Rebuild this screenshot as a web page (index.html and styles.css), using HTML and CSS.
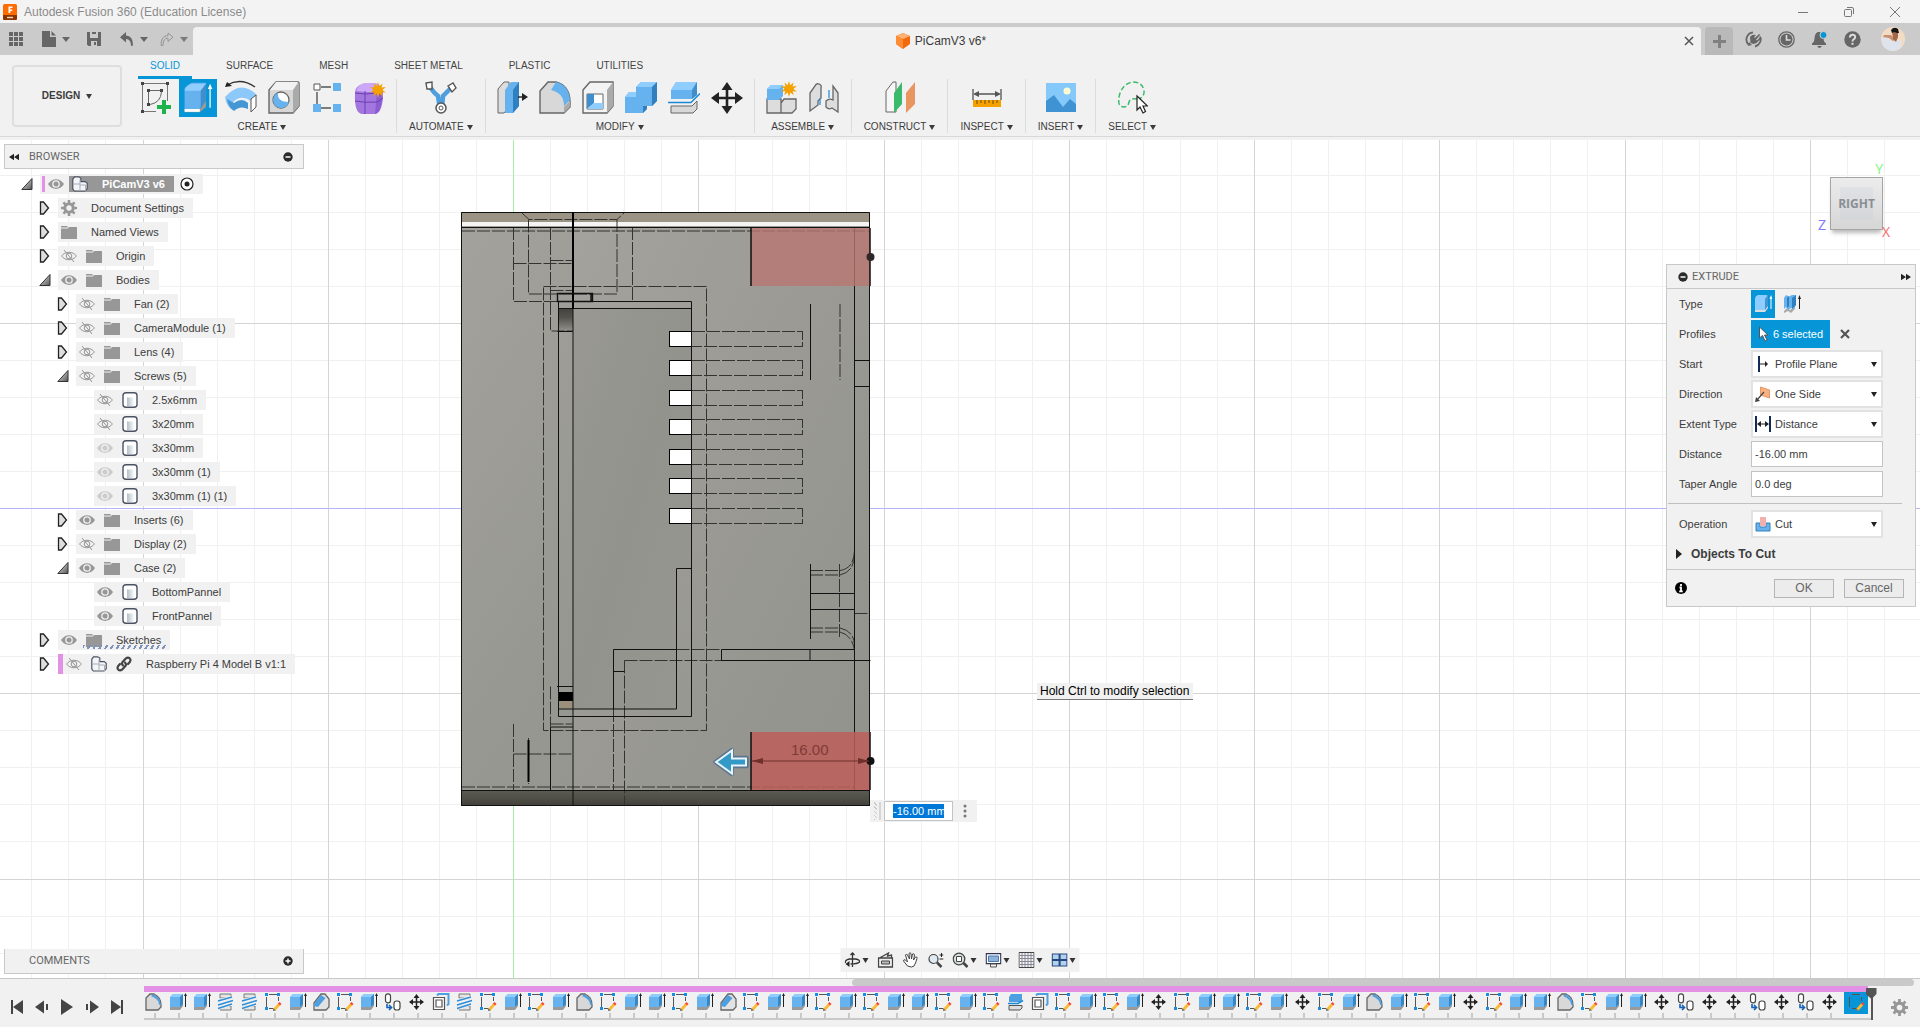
FILE: index.html
```html
<!DOCTYPE html>
<html lang="en">
<head>
<meta charset="utf-8">
<title>Autodesk Fusion 360 (Education License)</title>
<link rel="stylesheet" href="styles.css">
</head>
<body>
<svg class="sprite" aria-hidden="true">
  <defs>
    <linearGradient id="gTri" x1="0" y1="0" x2="1" y2="1"><stop offset="0" stop-color="#eee"/><stop offset="1" stop-color="#555"/></linearGradient>
    <linearGradient id="gCyl"><stop offset="0" stop-color="#fff"/><stop offset=".1" stop-color="#b9c0cb"/><stop offset="1" stop-color="#fff"/></linearGradient>
  </defs>
  <symbol id="closed" viewBox="0 0 12 14"><path d="M1.500 1h3l5 6-5 6h-3z" fill="#ddd" stroke="#222" stroke-width="1.300"/></symbol>
  <symbol id="open" viewBox="0 0 12 14"><path d="M11 1.500V12.500H.8z" fill="url(#gTri)" stroke="#333"/></symbol>
  <symbol id="eye" viewBox="0 0 16 16"><path d="M0 8C4 1.500 12 1.500 16 8 12 14.500 4 14.500 0 8z" fill="#979797"/><circle cx="8" cy="8" r="3.200" fill="#979797" stroke="#f1f1f1" stroke-width="1.300"/></symbol>
  <symbol id="eyeoff" viewBox="0 0 16 16"><path d="M.6 8C4 3 12 3 15.400 8 12 13 4 13 .6 8z" fill="none" stroke="#979797"/><circle cx="8" cy="8" r="2.800" fill="none" stroke="#979797"/><path d="M3 2l10 12" stroke="#979797"/></symbol>
  <symbol id="folder" viewBox="0 0 16 16"><path d="M0 2h6l1.500 1.500H0zM0 4.500h7l1-1.500h8v12H0z" fill="#979797"/></symbol>
  <symbol id="gear" viewBox="0 0 16 16"><circle cx="8" cy="8" r="4.200" fill="none" stroke="#979797" stroke-width="3"/><path d="M8 0v3M8 13v3M0 8h3M13 8h3M2.400 2.400l2 2M11.600 11.600l2 2M13.600 2.400l-2 2M4.400 11.600l-2 2" stroke="#979797" stroke-width="2.600"/></symbol>
  <symbol id="cyl" viewBox="0 0 16 16"><path d="M1 3.500Q1 .8 4 .8h8q3 0 3 2.700v9q0 2.700-3 2.700H4q-3 0-3-2.700z" fill="#fff" stroke="#4a5263" stroke-width="1.400"/><path d="M4.500 5.500h8V14h-8z" fill="url(#gCyl)"/></symbol>
  <symbol id="comp" viewBox="0 0 16 16"><path d="M.8 3.200L2.600.8h4L8.800 2v3.600h4.400l2 1.600v5.600l-2 2.200H2.400l-1.600-2z" fill="#f4f5f7" stroke="#4a5263" stroke-width="1.200"/><path d="M1 8h7V3.500M8 8v7M8 9h5.500v6" fill="none" stroke="#a9aeb8"/></symbol>
  <symbol id="link" viewBox="0 0 16 16"><g fill="none" stroke="#444" stroke-width="2.200" stroke-linecap="round"><path d="M7 9.500Q5 7.500 7 5.500L10 2.300q2-1.500 3.600 0t.2 3.700L12 8"/><path d="M9 6.500q2 2 0 4l-3 3.200q-2 1.500-3.600 0T2.200 10L4 8"/></g></symbol>
  <symbol id="minus" viewBox="0 0 10 10"><circle cx="5" cy="5" r="4.700" fill="#2b2b2b"/><path d="M2.500 5h5" stroke="#fff" stroke-width="1.500"/></symbol>
  <symbol id="plus" viewBox="0 0 10 10"><circle cx="5" cy="5" r="4.700" fill="#2b2b2b"/><path d="M2.500 5h5M5 2.500v5" stroke="#fff" stroke-width="1.400"/></symbol>
  <symbol id="dbl" viewBox="0 0 10 8"><path d="M5 .8v6.400L0 4zM10 .8v6.400L5 4z" fill="#222"/></symbol>
  <symbol id="cube" viewBox="0 0 14 16"><path d="M7 0l7 3v8l-7 5-7-5V3z" fill="#f26a0c"/><path d="M7 0l7 3-7 3-7-3z" fill="#ffb073"/><path d="M0 3l7 3v10l-7-5z" fill="#ff8b33"/></symbol>
  <symbol id="star" viewBox="0 0 16 16"><path d="M8 0l1.300 4.200L12.500 1.500 11.600 5.500l4.200-.6L12.400 8l3.500 2.400-4.300-.2 1.200 4-3.500-2.800L8 16l-1.400-4.600-3.400 2.800 1.200-4-4.300.2L3.500 8 .2 4.900l4.200.6-.9-4 3.200 2.700z" fill="#f5a100"/></symbol>

  <symbol id="r-sketch" viewBox="0 0 32 38"><path d="M4 4.500h24M3.500 5v26M28.500 5v17M4 32.500h13" stroke="#777" fill="none"/><path d="M2 3h3v3H2zM27 3h3v3h-3zM2 31h3v3H2zM8 10h3v3H8zM21 10h3v3h-3zM8 24h3v3H8z" fill="#444"/><path d="M11 11.500h10M9.500 13v11M11 25.500q11-2 11.500-13" stroke="#666" fill="none"/><path d="M23 21h4v5h5v4h-5v5h-4v-5h-5v-4h5z" fill="#1fb34c"/></symbol>
  <symbol id="r-extrude" viewBox="0 0 32 38"><path d="M1 31h17l7-9v7l-7 6H1z" fill="#999"/><path d="M1 31h17v3.500H1z" fill="#fff"/><path d="M1 10q0-3 3-5l3-2q1-1 3-1h15v19l-7 10H1z" fill="#66b2ee"/><path d="M1 11q0-3 3-5l3-2q1-1 3-1h15l-6 8z" fill="#90cdff"/><path d="M19 11l6-8v18l-6 10z" fill="#3f8fce"/><path d="M29.500 8v22" stroke="#fff" stroke-width="1.400"/><path d="M29.500 3l2.500 6h-5z" fill="#fff"/></symbol>
  <symbol id="r-revolve" viewBox="0 0 32 38"><path d="M2 6q14-8 28 2" fill="none" stroke="#333" stroke-width="1.400"/><path d="M0 8l2-5 5 4z" fill="#222"/><path d="M0 18Q16 0 32 16l-6 6q-10-7-18 1l1 5-3 2q-5-4-6-12z" fill="#8cc8fa"/><path d="M2 20l7 4q8-6 14 0v6q-8-4-14 2-6-4-7-12z" fill="#4496d4"/><path d="M26 20l5-4v12l-5 5z" fill="#fff" stroke="#555"/></symbol>
  <symbol id="r-hole" viewBox="0 0 32 38"><path d="M1 11l7-8h22q1 0 1 1v23l-6 7H1z" fill="#d7d7d7" stroke="#666" stroke-width="1.400"/><path d="M8 3h22l-5 8H2z" fill="#f2f2f2"/><path d="M25 11l6-8v24l-6 7z" fill="#aaa"/><circle cx="13" cy="21" r="8" fill="#fff" stroke="#666" stroke-width="1.300"/><path d="M10 14q-1 9 11 9-2 6-8 6-7 0-8-8 1-6 5-7z" fill="#66b2ee"/></symbol>
  <symbol id="r-pattern" viewBox="0 0 32 38"><path d="M10 8h10M6 13v12M10 29h10" stroke="#555" stroke-width="1.400"/><path d="M3 5h6v6H3z" fill="#fff" stroke="#555"/><path d="M22 4h8v8h-8zM2 25h8v8H2zM22 25h8v8h-8z" fill="#66b2ee"/></symbol>
  <symbol id="r-form" viewBox="0 0 32 38"><path d="M1 14q0-7 8-9h14q7 3 6 13-1 16-8 17H8Q0 34 1 14z" fill="#a376e0"/><path d="M2 12q2-6 8-8h12q5 2 5 8-10 2-25 0z" fill="#cda8f8"/><path d="M23 12q6 1 5 9-2 14-7 14z" fill="#8a5ed0"/><path d="M11 12v23M1 22q10 2 22 1 4-2 6-4M1 14q10 2 22 0l5-4" fill="none" stroke="#6b3fb0"/><use href="#star" x="16" y="3" width="16" height="16"/></symbol>
  <symbol id="r-auto" viewBox="0 0 32 38"><path d="M5 8q4 6 8 9l2 14M27 8q-5 5-9 9l-1 14" stroke="#4f9ede" stroke-width="4.500" fill="none"/><path d="M1 4l6-1v7H2zM23 7l5-3 3 5-4 4z" fill="#fff" stroke="#555" stroke-width="1.400"/><circle cx="16" cy="29" r="5" fill="#fff" stroke="#555" stroke-width="1.500"/><circle cx="16" cy="29" r="2" fill="none" stroke="#555"/></symbol>
  <symbol id="r-press" viewBox="0 0 32 38"><path d="M2 10l6-7h5v25l-5 6H2z" fill="#ddd" stroke="#666"/><path d="M9 11l6-8h8v24l-6 7H9z" fill="#66b2ee"/><path d="M17 11l6-8v24l-6 7z" fill="#2f80c0"/><path d="M22 18h6" stroke="#222" stroke-width="1.400"/><path d="M26 14l6 4-6 4z" fill="#222"/></symbol>
  <symbol id="r-fillet" viewBox="0 0 32 38"><path d="M1 12l8-9h8q14 4 14 20v5l-6 6H1z" fill="#d8d8d8" stroke="#666" stroke-width="1.400"/><path d="M17 3q13 3 14 18l-6 6q0-13-13-16z" fill="#66b2ee"/><path d="M25 28l6-6v6l-6 6z" fill="#aaa"/></symbol>
  <symbol id="r-shell" viewBox="0 0 32 38"><path d="M1 11l7-8h23v24l-6 7H1z" fill="#f3f3f3" stroke="#666" stroke-width="1.400"/><path d="M25 11l6-8v24l-6 7z" fill="#aaa"/><path d="M5 15h16v15H5z" fill="#fff" stroke="#666"/><path d="M5 15h7v9l-7 6z" fill="#3f8fce"/><path d="M12 24h9v6H5z" fill="#90cdff"/></symbol>
  <symbol id="r-combine" viewBox="0 0 32 38"><path d="M0 18l4-5h7V8l5-5h16v19l-5 5h-5v3l-4 4H0z" fill="#66b2ee"/><path d="M11 8l5-5h16l-5 5zM0 18l4-5h7v5z" fill="#90cdff"/><path d="M27 8l5-5v19l-5 5zM18 27h4v3l-4 4z" fill="#3180bd"/></symbol>
  <symbol id="r-split" viewBox="0 0 32 38"><path d="M3 11l5-8h21v13l-5 4H3z" fill="#66b2ee"/><path d="M3 11l5-8h21l-5 8z" fill="#90cdff"/><path d="M24 11l5-8v13l-5 4z" fill="#3f8fce"/><path d="M3 27h21l5-5v8l-4 4H3z" fill="#d8d8d8" stroke="#666"/><path d="M0 23.500h23l9-9" stroke="#1a88d8" stroke-width="1.500" fill="none"/></symbol>
  <symbol id="r-move" viewBox="0 0 32 38"><path d="M16 7v24M4 19h24" stroke="#222" stroke-width="2.600"/><path d="M16 3l5.500 8h-11zM16 35l5.500-8h-11zM0 19l8-6v12zM32 19l-8-6v12z" fill="#222"/></symbol>
  <symbol id="r-assemble" viewBox="0 0 32 38"><path d="M2 20h14v14H2zM16 24l3-4h12v10l-4 4H16z" fill="#ddd" stroke="#666" stroke-width="1.300"/><path d="M2 10l4-4h12v11l-4 4H2z" fill="#66b2ee"/><path d="M2 10l4-4h12l-4 4z" fill="#90cdff"/><use href="#star" x="16" y="2" width="16" height="16"/></symbol>
  <symbol id="r-joint" viewBox="0 0 32 38"><path d="M2 14l5-7q1-3 4-2 3 1 2 4v10l-3 3v4l-8 6zM30 14l-5-7v14q-4-2-7 1v6q3 3 6 1l6 4z" fill="#ddd" stroke="#666" stroke-width="1.300"/><path d="M12 19v7M21 11v8" stroke="#2b8fe0" stroke-width="1.300"/></symbol>
  <symbol id="r-construct" viewBox="0 0 32 38"><path d="M2 12l7-9h3v30H2z" fill="#f6f6f6" stroke="#666"/><path d="M10 14l8-11v22l-8 9z" fill="#3cba6c"/><path d="M22 14l9-11v22l-9 9z" fill="#e8955f"/></symbol>
  <symbol id="r-inspect" viewBox="0 0 32 38"><path d="M2 10v11M30 10v11M4 15h24" stroke="#555" stroke-width="1.300"/><path d="M2 15l6-3v6zM30 15l-6-3v6z" fill="#555"/><path d="M2 21h28v7H2z" fill="#f5a100"/><path d="M6 21v4M10 21v3M14 21v4M18 21v3M22 21v4M26 21v3" stroke="#6e4a00"/></symbol>
  <symbol id="r-insert" viewBox="0 0 32 38"><path d="M1 4h30v29H1z" fill="#85c9fb"/><path d="M1 22l8-6 9 12 7-8 6 5v8H1z" fill="#3f93d2"/><circle cx="22" cy="12" r="3.500" fill="#fffbd0"/></symbol>
  <symbol id="r-select" viewBox="0 0 32 38"><path d="M21 20Q29 19 28 11 26 3 17 3 8 4 4 14 0 28 8 28q4 0 5-5 1-4 8-3z" fill="none" stroke="#3cba6c" stroke-width="1.500" stroke-dasharray="5 2.500"/><path d="M21 17v14l3-3 3 6 2.500-1.500L27 27h4.500z" fill="#fff" stroke="#222" stroke-width="1.200"/></symbol>

  <symbol id="t-ext" viewBox="0 0 18 18"><path d="M1 13h10l3-4v4l-3 4H1z" fill="#9a9a9a"/><path d="M1 4l3-3h10v10l-3 3H1z" fill="#66b2ee"/><path d="M1 4l3-3h10l-3 3z" fill="#90cdff"/><path d="M11 4l3-3v10l-3 3z" fill="#3787c5"/><path d="M16.500 2v12" stroke="#222"/><path d="M16.500 0L18 3h-3z" fill="#222"/></symbol>
  <symbol id="t-sk" viewBox="0 0 18 18"><path d="M4 1.500h8M1.500 4v10M4 15.500h4M13.500 4v4" stroke="#555"/><path d="M0 0h3v3H0zM12 0h3v3h-3zM0 14h3v3H0z" fill="#1a8de0"/><path d="M8.500 15.500l5-5.500 2 2-5 5.500h-2z" fill="#fbb92f"/><path d="M8 15l3 2.500-3 .5z" fill="#777"/><path d="M13 10.500l1.500-1.500 2 2-1.500 1.500z" fill="#f4443c"/></symbol>
  <symbol id="t-fillet" viewBox="0 0 18 18"><path d="M1 5l4-4h4q7 3 7 11v2l-3 3H1z" fill="#d8d8d8" stroke="#666" stroke-width="1.300"/><path d="M8 1.500q7.500 2 8 11l-2-1Q14 6 6 3z" fill="#4e9fe0"/></symbol>
  <symbol id="t-chamfer" viewBox="0 0 18 18"><path d="M1 10L8 1h4l4 5v8l-3 3H1z" fill="#e2e2e2" stroke="#666" stroke-width="1.300"/><path d="M1 11L8 2l4.500 3L5 14l-4-1z" fill="#4e9fe0"/></symbol>
  <symbol id="t-thread" viewBox="0 0 18 18"><path d="M3 1h11v4H3zM3 13h11v4H3z" fill="#e5e5e5" stroke="#777"/><path d="M1 8l14-4M1 12l15-4.500M1 15.500L15 11" stroke="#f1f1f1" stroke-width="3"/><path d="M1 8l14-4M1 12l15-4.500M1 15.500L15 11" stroke="#2e8fd8" stroke-width="1.500"/></symbol>
  <symbol id="t-joint" viewBox="0 0 18 18"><rect x="1.500" y=".8" width="5" height="9" rx="2.300" fill="#fff" stroke="#444" stroke-width="1.200"/><rect x="10" y="8" width="6" height="9" rx="2.500" fill="#fff" stroke="#444" stroke-width="1.200"/><path d="M3 11v3.500h4M5 12l2.500 2.500L5 17" stroke="#1260b8" stroke-width="1.600" fill="none"/></symbol>
  <symbol id="t-move" viewBox="0 0 18 18"><path d="M8.500 3v12M2 9h13" stroke="#222" stroke-width="1.500"/><path d="M8.500 1l3 4h-6zM8.500 17l3-4h-6zM1 9l4-3v6zM16 9l-4-3v6z" fill="#222"/></symbol>
  <symbol id="t-shell" viewBox="0 0 18 18"><path d="M5 2.500L6.500 1h10v10L15 12.500" fill="none" stroke="#4e9fe0" stroke-width="2"/><path d="M1.500 4.500h11v12h-11zM4 7h6v7H4z" fill="#fff" stroke="#555" stroke-width="1.200"/></symbol>
  <symbol id="t-split" viewBox="0 0 18 18"><path d="M2 4l2-3h11v6l-2 2H2z" fill="#4e9fe0"/><path d="M2 12.500h13V15l-2 2H2z" fill="#ddd" stroke="#555"/><path d="M1 10.500h10l5-3" stroke="#1a88d8" stroke-width="1.500" fill="none"/></symbol>
</svg>

<header class="titlebar">
  <svg class="applogo" viewBox="0 0 14 16"><rect width="14" height="16" rx="1.500" fill="#ff6b00"/><path d="M0 11h14v3.500q0 1.500-1.500 1.500h-11Q0 16 0 14.500z" fill="#8a3200"/><path d="M5.500 2.500h4v1.500h-2.200v1.500h2v1.400h-2V9H5.500z" fill="#fff"/><path d="M4 13.500h6" stroke="#ffd9b8" stroke-width="1.400"/></svg>
  <span class="apptitle">Autodesk Fusion 360 (Education License)</span>
  <div class="winctl">
    <button aria-label="Minimize"><svg viewBox="0 0 12 12"><path d="M1 6.500h10" stroke="#777"/></svg></button>
    <button aria-label="Restore"><svg viewBox="0 0 12 12"><rect x="1.500" y="3.500" width="7" height="7" rx="1" fill="none" stroke="#777"/><path d="M4 1.500h5q1.500 0 1.500 1.500v5" fill="none" stroke="#777"/></svg></button>
    <button aria-label="Close"><svg viewBox="0 0 12 12"><path d="M1 1l10 10M11 1L1 11" stroke="#777"/></svg></button>
  </div>
</header>

<div class="docbar">
  <div class="quick">
    <button aria-label="Data panel"><svg width="14" height="14" viewBox="0 0 14 14"><path d="M0 0h4v4H0zM5 0h4v4H5zM10 0h4v4h-4zM0 5h4v4H0zM5 5h4v4H5zM10 5h4v4h-4zM0 10h4v4H0zM5 10h4v4H5zM10 10h4v4h-4z" fill="#666"/></svg></button>
    <button class="file" aria-label="File"><svg width="14" height="16" viewBox="0 0 14 16"><path d="M0 0h8v6h6v10H0zM9.500 0L14 4.500H9.500z" fill="#666"/></svg><i class="caret"></i></button>
    <button class="save" aria-label="Save"><svg width="14" height="14" viewBox="0 0 14 14"><path d="M0 0h14v14H1.500L0 12.500z" fill="#666"/><path d="M3 0h8v6H3zM4 9h6v5H4z" fill="#ccc"/><path d="M5 1h4M8 10v3" stroke="#666" stroke-width="2"/></svg></button>
    <button class="undo" aria-label="Undo"><svg width="14" height="14" viewBox="0 0 14 14"><path d="M6 0v3.500q7 0 7 10l-2 .5Q11 7 6 7v3.500L0 5.300z" fill="#666"/></svg><i class="caret"></i></button>
    <button class="redo" aria-label="Redo"><svg width="14" height="14" viewBox="0 0 14 14"><path d="M8 1v2.500q-7 0-7 10h2Q3 6 8 6v3.500l5-4.300z" fill="none" stroke="#8a8a8a"/></svg><i class="caret"></i></button>
  </div>
  <div class="doctab">
    <svg width="14" height="16"><use href="#cube"/></svg><span>PiCamV3 v6*</span>
    <button class="closetab" aria-label="Close tab"><svg width="10" height="10" viewBox="0 0 10 10"><path d="M1 1l8 8M9 1L1 9" stroke="#555" stroke-width="1.500"/></svg></button>
  </div>
  <button class="newtab" aria-label="New tab"><svg width="13" height="13" viewBox="0 0 13 13"><path d="M6.500 0v13M0 6.500h13" stroke="#808080" stroke-width="3"/></svg></button>
  <div class="status">
    <button aria-label="Extensions"><svg width="17" height="17" viewBox="0 0 17 17"><path d="M3.500 13.500A7.200 7.200 0 0 1 8 1.300M10 15.500A7.200 7.200 0 0 0 15 5.500" fill="none" stroke="#666" stroke-width="1.800"/><path d="M3 15l1-4 3 3zM5 6q3-4 7-1l2-2 1.200 1-2 2 1 1 1.800-1 .5 2-3 2q-2 3-5 3l-3-1z" fill="#666"/><path d="M9.500 6.500L12 4M11.500 9l2.500-2.500" stroke="#ccc" stroke-width="1.200"/></svg></button>
    <button aria-label="Job status"><svg width="17" height="17" viewBox="0 0 17 17"><circle cx="8.500" cy="8.500" r="7.700" fill="none" stroke="#666" stroke-width="1.300"/><circle cx="8.500" cy="8.500" r="6" fill="#666"/><path d="M8.500 4v5h4" stroke="#ddd" stroke-width="1.600" fill="none"/></svg></button>
    <button aria-label="Notifications"><svg width="17" height="17" viewBox="0 0 17 17"><path d="M7 1h2q3 1 3.500 6 0 4 2.500 5.500v1.500H1v-1.500Q3.500 11 3.500 7 4 2 7 1zM6 15h5l-2 2H8z" fill="#666"/><circle cx="12.500" cy="4" r="3.500" fill="#0696d7" stroke="#ccc"/></svg></button>
    <button aria-label="Help"><svg width="17" height="17" viewBox="0 0 17 17"><circle cx="8.500" cy="8.500" r="8.200" fill="#666"/><path d="M5.800 6.500q.2-2.700 2.700-2.700t2.700 2.200q0 1.500-1.500 2.300-1.200.7-1.200 2.200" stroke="#ddd" stroke-width="1.900" fill="none"/><path d="M7.500 11.800h2v2h-2z" fill="#ddd"/></svg></button>
    <button class="avatar" aria-label="Account"><svg width="24" height="24" viewBox="0 0 24 24"><defs><clipPath id="av"><circle cx="12" cy="12" r="12"/></clipPath></defs><g clip-path="url(#av)"><path d="M0 0h24v24H0z" fill="#f3dcc4"/><path d="M0 11q6-2 11 3l9-1v8l-6 3H4z" fill="#dfe3ee"/><path d="M3 8l7 0 4 5-2 1-4-3-6-1z" fill="#c98f72"/><path d="M11 4h6v6l-2 5-3-3z" fill="#a5674a"/><path d="M10 3q3-4 7-1l1 4-2 0-3-1-2 1z" fill="#151515"/></g></svg></button>
  </div>
</div>

<div class="ribbon">
  <button class="design">DESIGN <i class="caret"></i></button>
  <div class="ribmain">
    <nav class="tabs">
      <a href="#" class="on">SOLID</a><a href="#">SURFACE</a><a href="#">MESH</a><a href="#">SHEET METAL</a><a href="#">PLASTIC</a><a href="#">UTILITIES</a>
    </nav>
    <div class="groups">
      <section class="group"><div class="tools">
        <button aria-label="Create Sketch"><svg><use href="#r-sketch"/></svg></button>
        <button class="on" aria-label="Extrude"><svg><use href="#r-extrude"/></svg></button>
        <button aria-label="Revolve"><svg><use href="#r-revolve"/></svg></button>
        <button aria-label="Hole"><svg><use href="#r-hole"/></svg></button>
        <button aria-label="Pattern"><svg><use href="#r-pattern"/></svg></button>
        <button aria-label="Create Form"><svg><use href="#r-form"/></svg></button>
      </div><button class="label">CREATE <i class="caret"></i></button></section>
      <section class="group"><div class="tools"><button aria-label="Automate"><svg><use href="#r-auto"/></svg></button></div><button class="label">AUTOMATE <i class="caret"></i></button></section>
      <section class="group"><div class="tools">
        <button aria-label="Press Pull"><svg><use href="#r-press"/></svg></button>
        <button aria-label="Fillet"><svg><use href="#r-fillet"/></svg></button>
        <button aria-label="Shell"><svg><use href="#r-shell"/></svg></button>
        <button aria-label="Combine"><svg><use href="#r-combine"/></svg></button>
        <button aria-label="Split Body"><svg><use href="#r-split"/></svg></button>
        <button aria-label="Move"><svg><use href="#r-move"/></svg></button>
      </div><button class="label">MODIFY <i class="caret"></i></button></section>
      <section class="group"><div class="tools">
        <button aria-label="New Component"><svg><use href="#r-assemble"/></svg></button>
        <button aria-label="Joint"><svg><use href="#r-joint"/></svg></button>
      </div><button class="label">ASSEMBLE <i class="caret"></i></button></section>
      <section class="group"><div class="tools"><button aria-label="Offset Plane"><svg><use href="#r-construct"/></svg></button></div><button class="label">CONSTRUCT <i class="caret"></i></button></section>
      <section class="group"><div class="tools"><button aria-label="Measure"><svg><use href="#r-inspect"/></svg></button></div><button class="label">INSPECT <i class="caret"></i></button></section>
      <section class="group"><div class="tools"><button aria-label="Canvas"><svg><use href="#r-insert"/></svg></button></div><button class="label">INSERT <i class="caret"></i></button></section>
      <section class="group"><div class="tools"><button aria-label="Select"><svg><use href="#r-select"/></svg></button></div><button class="label">SELECT <i class="caret"></i></button></section>
    </div>
  </div>
</div>

<main class="viewport">
  <svg class="scene" aria-label="Model view">
    <defs>
      <linearGradient id="body" x1="0" y1="0" x2="1" y2="1"><stop offset="0" stop-color="#a3a29d"/><stop offset=".5" stop-color="#979791"/><stop offset="1" stop-color="#93948e"/></linearGradient>
      <linearGradient id="inner" x1="0" y1="0" x2="1" y2="1"><stop offset="0" stop-color="#999893"/><stop offset=".5" stop-color="#92938d"/><stop offset="1" stop-color="#979791"/></linearGradient>
      <linearGradient id="right" x1="0" y1="0" x2="1" y2="1"><stop offset="0" stop-color="#a3a29d"/><stop offset=".4" stop-color="#9c9b95"/><stop offset="1" stop-color="#91928c"/></linearGradient>
      <linearGradient id="dark" x1="0" y1="0" x2="0" y2="1"><stop offset="0" stop-color="#5c5b54"/><stop offset=".7" stop-color="#4a4942"/><stop offset="1" stop-color="#3f3e38"/></linearGradient>
      <linearGradient id="fade" x1="0" y1="0" x2="0" y2="1"><stop offset="0" stop-color="#45433d"/><stop offset=".4" stop-color="#55534d"/><stop offset="1" stop-color="#92918b"/></linearGradient>
    </defs>
    <g transform="translate(0 -140)">
      <g id="grid"></g>
      <path d="M461 212h409v594H461z" fill="url(#body)"/>
      <path d="M573 227h297v563H573z" fill="url(#right)"/>
      <path d="M573 309h118v260h-15v140H573z" fill="url(#inner)"/>
      <path d="M461 212h409v10H461z" fill="#9b9484"/>
      <path d="M461 222h409v4H461z" fill="#f4f4f2"/>
      <path d="M461 790h409v16H461z" fill="url(#dark)"/>
      <path d="M558 309h15v22h-15z" fill="url(#fade)"/>
      <path d="M558 692h15v9h-15z" fill="#000"/><path d="M558 701h15v7h-15z" fill="#9b8f7c"/>
      <g id="slots" shape-rendering="crispEdges"></g>
      <g class="dash">
        <path d="M522 213l7 6.500h88l7-6.500M528.500 219.500V294h88.500V219.500M513.500 227v74.500h119V227M550.500 227v104h22.500M513.500 263.500h59.500M550.500 260.500h22.500M550.500 290.500h22.500M543.500 286.500h163v444h-163zM462 231h408M462 787h392M840 304v76M676.500 649.500h45M624.500 660.500h246M624.500 660.500v144M613.500 709v81M550.500 686.500v40M550.500 724h22M528.500 738v46M513.500 724v66M513.500 754h60M810 570.500h30M810 575h30M810 628h30M810 632h30M840 570.500q14-2 14.500-20M840 575q14-3 14.500-20M840 628q14 3 14.500 17M840 632q12 3 14.500 18M839.500 564v75M854.500 613.500h15"/>
      </g>
      <g class="line">
        <path d="M461.500 212.500h408v593h-408zM462 227.500h408M462 790.500h408M573 309v496M558.500 301v415.500h133V301.500H573M558 308.500h133.500M557 686.500h16M558 709h118.500V568.500h15M613.500 709V649.500h63M721.500 649.500h133M721.500 649.500v11M810 649.500v11M613.500 671.500h11M854.500 227v563M550.500 727h22.500M550.500 727v63M854 360.500h15M854 386.500h15M810.500 304v76M810.500 564v75M810 593.500h44M810 609.500h44M557.500 331.500h15M721.500 660.500h148"/>
      </g>
      <path d="M573 212v97M528.500 740v42" fill="none" stroke="#000" stroke-width="2"/>
      <path d="M557.500 293.500h35v8h-35zM591 294v8" fill="none" stroke="#111" stroke-width="1.400"/>
      <path d="M751 228h119v58H751z" fill="#b97672" fill-opacity=".8"/>
      <path d="M751 732h119v58H751z" fill="#be5e5a" fill-opacity=".86"/>
      <path d="M751 228v58M751 732v58M870 228v58M870 732v58" stroke="#111" stroke-width="1.500"/>
      <circle cx="870.500" cy="257" r="4" fill="#2d2727"/><circle cx="870.500" cy="761" r="4" fill="#111"/>
      <path d="M752 761h117" stroke="#702f2c"/><path d="M752 761l11-3v6zM869 761l-11-3v6z" fill="#702f2c"/>
      <text x="791" y="755" class="dim">16.00</text>
      <path d="M715 762l17-12.500v8h15v9h-15v8z" fill="#3399c6" stroke="#5a7590" stroke-width="3.500" stroke-linejoin="round"/><path d="M716 762l16-11.500v8h14v7h-14v8z" fill="#3399c6" stroke="#e8f4fb" stroke-width="2"/>
    </g>
  </svg>

  <section class="browser">
    <h2 class="bar"><button aria-label="Collapse"><svg width="10" height="8"><use href="#dbl"/></svg></button><span>BROWSER</span><button class="end" aria-label="Minimize browser"><svg width="10" height="10"><use href="#minus"/></svg></button></h2>
    <ul class="tree" id="tree"></ul>
  </section>

  <div class="viewcube">
    <span class="ax y">Y</span><span class="ax z">Z</span><button class="face">RIGHT</button><span class="ax x">X</span>
  </div>

  <form class="dialog">
    <h2><svg width="10" height="10"><use href="#minus"/></svg><span>EXTRUDE</span><button type="button" class="end flip" aria-label="Expand"><svg width="10" height="8"><use href="#dbl"/></svg></button></h2>
    <div class="fields">
      <span>Type</span>
      <div class="types"><button type="button" class="on" aria-label="Extrude"><svg width="18" height="20" viewBox="0 0 18 20"><path d="M1 14h10l3-4v4l-3 4H1z" fill="#ddd"/><path d="M1 5q0-3 3-4h8q2 0 2 2v9l-3 4H1z" fill="#90cdff"/><path d="M11 5l3-4v11l-3 4z" fill="#4794d3"/><path d="M17 3v12" stroke="#fff"/><path d="M17 1l1.500 4h-3z" fill="#fff"/></svg></button><button type="button" aria-label="Thin extrude"><svg width="18" height="20" viewBox="0 0 18 20"><path d="M1 17l3-3 3 2 3-2 2-4v5l-4 4-3-2-4 2z" fill="#aaa"/><path d="M1 4l2-3 3 1.500L9 1h4v10l-3 4-2-1-3 2-2-3-2 2z" fill="#66b2ee"/><path d="M4 4l2-2v10l-2 2zM9 4l4-3v10l-4 4z" fill="#2f80c0"/><path d="M16.500 3v12" stroke="#222"/><path d="M16.500 1l1.500 4h-3z" fill="#222"/></svg></button></div>
      <span>Profiles</span>
      <div class="profiles"><button type="button" class="sel"><svg width="12" height="16" viewBox="0 0 12 16"><path d="M1.500 1v11l3-2.500L7 15l2-1-2.500-5H10z" fill="#fff" stroke="#555"/></svg>6 selected</button><button type="button" aria-label="Clear"><svg width="10" height="10" viewBox="0 0 10 10"><path d="M1 1l8 8M9 1L1 9" stroke="#555" stroke-width="2.200"/></svg></button></div>
      <label for="f1">Start</label>
      <div class="pick"><svg viewBox="0 0 16 16"><path d="M4 0v16" stroke="#10295c" stroke-width="2"/><path d="M5 8h7" stroke="#222"/><path d="M10 5l3 3-3 3z" fill="#222"/></svg><select id="f1"><option>Profile Plane</option></select><i class="caret"></i></div>
      <label for="f2">Direction</label>
      <div class="pick"><svg viewBox="0 0 16 16"><path d="M5.500 1l9 3v8l-9-3z" fill="#f6b184" stroke="#e8955f"/><path d="M9 6l-7 8" stroke="#444" stroke-width="1.200"/><path d="M0 16l1-5 4 4z" fill="#444"/></svg><select id="f2"><option>One Side</option></select><i class="caret"></i></div>
      <label for="f3">Extent Type</label>
      <div class="pick"><svg viewBox="0 0 16 16"><path d="M1 0v16M15 0v16" stroke="#10295c" stroke-width="2"/><path d="M3 8h10" stroke="#222"/><path d="M2 8l4-3v6zM14 8l-4-3v6z" fill="#222"/></svg><select id="f3"><option>Distance</option></select><i class="caret"></i></div>
      <label for="f4">Distance</label><input id="f4" value="-16.00 mm">
      <label for="f5">Taper Angle</label><input id="f5" value="0.0 deg">
    </div>
    <hr>
    <div class="fields">
      <label for="f6">Operation</label>
      <div class="pick"><svg viewBox="0 0 16 16"><path d="M1 7h4v4h6V7h4v8H1z" fill="#66b2ee" stroke="#3780b8"/><path d="M5 1h6v9H5z" fill="#f0b0ae"/></svg><select id="f6"><option>Cut</option></select><i class="caret"></i></div>
    </div>
    <button type="button" class="objects"><svg width="6" height="10" viewBox="0 0 6 10"><path d="M0 0l6 5-6 5z" fill="#222"/></svg>Objects To Cut</button>
    <footer><svg width="12" height="12" viewBox="0 0 12 12"><circle cx="6" cy="6" r="6" fill="#000"/><path d="M6 2v2M4.500 5.500H6V9M4.200 9.300h3.600" stroke="#fff" stroke-width="1.800" fill="none"/></svg><button type="button">OK</button><button type="button">Cancel</button></footer>
  </form>

  <div class="tip">Hold Ctrl to modify selection</div>
  <div class="dimbox"><i class="grip"></i><div class="dimwrap"><input aria-label="Distance" value="-16.00 mm"></div><button aria-label="More"><svg width="4" height="14" viewBox="0 0 4 14"><circle cx="2" cy="2" r="1.500" fill="#777"/><circle cx="2" cy="7" r="1.500" fill="#777"/><circle cx="2" cy="12" r="1.500" fill="#777"/></svg></button></div>

  <div class="navbar">
    <button aria-label="Orbit"><svg viewBox="0 0 16 16"><path d="M8 1v14M6 3l2-2 2 2M1 11q-1-3 4-4h6q5 1 4 3-2 2-9 2" fill="none" stroke="#333" stroke-width="1.300"/><path d="M5 9v6l-4-3z" fill="#222"/></svg><i class="caret"></i></button>
    <button aria-label="Look at"><svg viewBox="0 0 16 16"><path d="M1 6h14v9H1zM2 6l9-5-1 3 4-1v3" fill="#eee" stroke="#444" stroke-width="1.300"/><path d="M4 9h8v3H4z" fill="#bbb" stroke="#444"/></svg></button>
    <button aria-label="Pan"><svg viewBox="0 0 16 16"><path d="M5 14L1 9q0-2 2-1l2 2L3 3q1-2 2 0l2 4-.5-5.500q1-1.500 2 0L9 7l1-5q1.500-1 2 1l-1 5 2-3q2-.5 1.500 1.500L13 11q-1 4-4 4z" fill="#fff" stroke="#444"/></svg></button>
    <button aria-label="Zoom"><svg viewBox="0 0 16 16"><circle cx="6" cy="7" r="4.500" fill="#dfeaf2" stroke="#444" stroke-width="1.200"/><path d="M9.500 10.500L14 15" stroke="#444" stroke-width="2.500"/><path d="M12 3h4M14 1v4M12 7h4" stroke="#222"/></svg></button>
    <button aria-label="Fit"><svg viewBox="0 0 16 16"><circle cx="6.500" cy="7" r="5.800" fill="#d5dfe0" stroke="#444" stroke-width="1.300"/><path d="M4 4.500h5v5H4z" fill="#fff" stroke="#444"/><path d="M11 11l4 4" stroke="#444" stroke-width="2.600"/></svg><i class="caret"></i></button>
    <button aria-label="Display settings"><svg viewBox="0 0 16 16"><path d="M.7 1.700h14.600v10H.7z" fill="#fff" stroke="#335" stroke-width="1.300"/><path d="M3 4h10v5.500H3z" fill="#8db3dc" stroke="#4a78ac"/><path d="M5 12h6v3H5z" fill="#eee" stroke="#555"/></svg><i class="caret"></i></button>
    <button aria-label="Grid and snaps"><svg viewBox="0 0 16 16"><path d="M.5.500h15v15H.5z" fill="#f3f3f3" stroke="#444"/><path d="M3.500 1v14M6.500 1v14M9.500 1v14M12.500 1v14M1 3.500h14M1 6.500h14M1 9.500h14M1 12.500h14" stroke="#889"/></svg><i class="caret"></i></button>
    <button aria-label="Viewports"><svg viewBox="0 0 16 16"><path d="M.7 2h7v5.500h-7zM8.500 2h7v5.500h-7zM.7 8.500h7V14h-7zM8.500 8.500h7V14h-7z" fill="#b5d0ec" stroke="#234a80" stroke-width="1.200"/></svg><i class="caret"></i></button>
  </div>

  <h2 class="bar comments"><span>COMMENTS</span><button class="end" aria-label="Add comment"><svg width="10" height="10"><use href="#plus"/></svg></button></h2>
</main>

<footer class="timeline">
  <div class="play">
    <button aria-label="Start"><svg viewBox="0 0 14 16"><path d="M1 1h2v14H1zM13 1v14L3 8z" fill="#444"/></svg></button>
    <button aria-label="Step back"><svg viewBox="0 0 14 16"><path d="M9 1.500v13L0 8zM11 5h2v6h-2z" fill="#444"/></svg></button>
    <button aria-label="Play"><svg viewBox="0 0 14 16"><path d="M1 0v16l12-8z" fill="#444"/></svg></button>
    <button aria-label="Step forward"><svg viewBox="0 0 14 16"><path d="M5 1.500v13L14 8zM1 5h2v6H1z" fill="#444"/></svg></button>
    <button aria-label="End"><svg viewBox="0 0 14 16"><path d="M1 1v14l10-7zM11 1h2v14h-2z" fill="#444"/></svg></button>
  </div>
  <div class="track">
    <div class="scroll"><i></i></div>
    <div class="pink"></div>
    <ol id="steps"></ol>
  </div>
  <button class="settings" aria-label="Timeline settings"><svg width="17" height="17"><use href="#gear"/></svg></button>
</footer>
<script src="app.js"></script>
</body>
</html>
```
FILE: styles.css
```css
* { box-sizing: border-box; }
body {
  margin: 0;
  height: 100vh;
  display: flex;
  flex-direction: column;
  overflow: hidden;
  background: #f1f1f1;
  color: #3c3c3c;
  font: 11px/16px "Liberation Sans", Arial, sans-serif;
}
button, input, select { font: inherit; color: inherit; }
button {
  display: flex;
  align-items: center;
  justify-content: center;
  padding: 0;
  border: 0;
  background: none;
}
h2, ul, ol { margin: 0; padding: 0; font-size: inherit; font-weight: normal; list-style: none; }
svg { display: block; flex: none; }
.sprite { position: absolute; width: 0; height: 0; }
.end { margin-left: auto; }
.caret {
  flex: none;
  border: 4px solid transparent;
  border-top: 5px solid currentColor;
  border-bottom: 0;
}

/* Window title */
.titlebar { display: flex; align-items: center; height: 23px; padding-left: 3px; background: #f3f3f3; }
.applogo { width: 14px; height: 16px; }
.apptitle { margin-left: 7px; color: #8b8b8b; font-size: 12px; }
.winctl { display: flex; margin: 0 2px 0 auto; }
.winctl button { width: 46px; height: 22px; }
.winctl svg { width: 12px; height: 12px; }

/* Document tab strip */
.docbar { display: flex; align-items: flex-end; height: 32px; background: #cbcbcb; }
.quick { display: flex; align-items: center; width: 193px; height: 32px; padding-left: 9px; color: #666; }
.quick button { gap: 6px; }
.file { margin-left: 19px; }
.save { margin-left: 17px; }
.undo { margin-left: 19px; }
.redo { margin-left: 12px; opacity: .8; }
.doctab {
  flex: 1;
  display: flex;
  align-items: center;
  justify-content: center;
  gap: 5px;
  height: 28px;
  padding-right: 12px;
  position: relative;
  border-radius: 4px 4px 0 0;
  background: #f1f1f1;
  font-size: 12px;
}
.closetab { position: absolute; right: 7px; top: 9px; }
.newtab { width: 28px; height: 28px; margin-left: 4px; border-radius: 4px 4px 0 0; background: #b9b9b9; }
.status { display: flex; align-items: center; height: 32px; gap: 16px; margin: 0 15px 0 12px; }
.avatar { margin-left: 4px; }

/* Ribbon */
.ribbon { display: flex; height: 82px; border-bottom: 1px solid #d8d8d8; margin-bottom: 3px; font-size: 10px; line-height: 14px; }
.ribbon .caret { border-width: 5px 3px 0; }
.design {
  width: 110px;
  height: 62px;
  margin: 10px 0 0 12px;
  gap: 6px;
  border: 2px solid #dedede;
  border-radius: 4px;
  font-weight: bold;
}
.ribmain { flex: 1; margin-left: 6px; }
.tabs { display: flex; gap: 22px; height: 24px; padding-left: 10px; }
.tabs a { padding: 4px 12px 0; color: #444; text-decoration: none; }
.tabs .on { color: #0696d7; border-bottom: 3px solid #0696d7; }
.groups { display: flex; }
.group { padding: 0 5px; border-right: 1px solid #dcdcdc; height: 54px; }
.group:last-child { border: 0; }
.tools { display: flex; justify-content: center; }
.tools button { width: 43px; height: 38px; }
.tools svg { width: 32px; height: 38px; }
.tools .on { background: linear-gradient(#0696d7, #0696d7) center / 38px 38px no-repeat; }
.tools .on svg { width: 30px; height: 34px; }
.label { margin: 0 auto; padding: 3px 7px 0; gap: 3px; }

/* Canvas */
.viewport { flex: 1; position: relative; display: flex; flex-direction: column; min-height: 0; background: #fff; }
.scene { position: absolute; inset: 0; width: 100%; height: 100%; }
.scene .dash { fill: none; stroke: #33332f; stroke-width: 1; stroke-dasharray: 13 2; }
.scene .line { fill: none; stroke: #111; stroke-width: 1; }
.scene .dim { font: 15px "Liberation Sans", sans-serif; fill: #7e3b38; }
.minor { stroke: #f0f0f0; }
.major { stroke: #d4d4d4; }
.bar {
  display: flex;
  align-items: center;
  width: 300px;
  height: 25px;
  padding: 0 10px 0 4px;
  border: 1px solid #c8c8c8;
  background: #f1f1f1;
  color: #666;
  font: 11px/16px Roboto, sans-serif;
}
.bar span { margin-left: 10px; }
.browser { position: relative; margin: 4px 0 0 4px; }
.tree { margin-top: 5px; }
.row { display: flex; align-items: center; height: 20px; margin-bottom: 4px; }
.l0 { padding-left: 16px; }
.l1 { padding-left: 34px; }
.l2 { padding-left: 52px; }
.l3 { padding-left: 90px; }
.row > button { width: 14px; margin-right: 6px; }
.row > button svg { width: 12px; height: 14px; }
.node { display: flex; align-items: center; gap: 9px; height: 20px; padding: 0 9px 0 3px; background: #f1f1f1; position: relative; }
.node svg { width: 16px; height: 16px; }
.node span { margin-left: 5px; white-space: nowrap; }
.faint { opacity: .4; }
.pinkbar { align-self: stretch; width: 5px; margin: 0 -6px 0 -3px; background: #e391e5; }
.root { padding: 0 8px 0 2px; gap: 5px; }
.root .pinkbar { width: 3px; margin: 2px -2px 2px 0; }
.hot { display: flex; align-items: center; height: 16px; padding: 0 9px 0 3px; gap: 9px; background: #979797; color: #fff; font-weight: bold; }
.hatch::after {
  content: "";
  position: absolute;
  left: 25px;
  right: 2px;
  bottom: 1px;
  height: 4px;
  background: repeating-linear-gradient(120deg, #7f93b8 0 2px, transparent 2px 5px);
}
.comments { position: relative; margin: auto 0 4px 4px; padding-left: 14px; border-top: 0; }

.viewcube { position: absolute; top: 37px; right: 37px; width: 53px; height: 53px; }
.face {
  width: 53px;
  height: 53px;
  border: 1px solid #a5a5a5;
  background: linear-gradient(#dfe1e4, #d4d6d9) center / 33px 33px no-repeat, linear-gradient(#ececec, #d6d6d6);
  box-shadow: 0 5px 4px -2px #bbb;
  color: #8a8e93;
  font: bold 12px/16px "Open Sans", sans-serif;
}
.ax { position: absolute; font: 14px/16px "Open Sans", sans-serif; }
.ax.y { top: -16px; right: 0; color: #7cf57c; }
.ax.z { bottom: -3px; left: -12px; color: #7c7cfa; }
.ax.x { bottom: -10px; right: -7px; color: #fa6868; }

.dialog { position: absolute; top: 124px; right: 4px; width: 250px; border: 1px solid #c8c8c8; background: #f1f1f1; }
.dialog h2 { display: flex; align-items: center; height: 24px; padding: 0 4px 0 11px; gap: 4px; border-bottom: 1px solid #c8c8c8; color: #666; font: 11px/16px Roboto, sans-serif; }
.flip { transform: scaleX(-1); }
.fields { display: grid; grid-template-columns: 72px 132px; grid-auto-rows: 28px; row-gap: 2px; align-items: center; padding: 1px 0 0 12px; }
.types { display: flex; gap: 5px; }
.types button { width: 24px; height: 28px; }
.types .on, .sel { background: #0696d7; }
.profiles { display: flex; gap: 10px; }
.sel { width: 79px; height: 28px; gap: 3px; color: #fff; }
.pick { display: flex; align-items: center; position: relative; height: 28px; border: 2px solid #e2e2e2; background: #fff; }
.pick svg { position: absolute; left: 2px; width: 16px; height: 16px; pointer-events: none; }
.pick .caret { position: absolute; right: 4px; border-width: 5px 3px 0; color: #222; }
.pick select { appearance: none; width: 100%; height: 100%; padding: 0 0 0 22px; border: 0; background: transparent; }
.fields input { height: 26px; padding: 0 3px; border: 1px solid #c4c4c4; background: #fff; }
.dialog hr { margin: 5px 13px 5px 1px; border: 0; border-top: 1px solid #c0c0c0; }
.objects { height: 30px; padding-left: 9px; gap: 9px; margin-top: 1px; font-weight: bold; font-size: 12px; }
.dialog footer { display: flex; align-items: center; height: 37px; padding: 0 11px 0 8px; gap: 10px; border-top: 1px solid #c8c8c8; }
.dialog footer svg { margin-right: auto; }
.dialog footer button { width: 60px; height: 19px; border: 1px solid #b5b5b5; background: #ececec; color: #666; font-size: 12px; }

.tip { position: absolute; left: 1037px; top: 543px; padding: 0 4px 0 3px; background: #f1f1f1; border-bottom: 1px solid #777; color: #000; font-size: 12px; }
.dimbox { position: absolute; left: 870px; top: 660px; display: flex; align-items: center; width: 107px; height: 22px; background: #f1f1f1; }
.grip { width: 11px; height: 18px; margin-right: 3px; border-right: 2px solid #d5d5d5; background: repeating-linear-gradient(45deg, #ccc 0 1px, transparent 1px 3px) 4px 0 / 3px 18px no-repeat; }
.dimwrap { width: 69px; height: 20px; padding: 2px 8px; border: 1px solid #c4c4c4; background: #fff; }
.dimwrap input { display: block; width: 51px; height: 14px; padding: 0; border: 0; background: #0078d7; color: #fff; }
.dimbox button { margin-left: 10px; }

.navbar {
  position: absolute;
  left: 50%;
  bottom: 6px;
  transform: translateX(-50%);
  display: flex;
  align-items: center;
  gap: 9px;
  height: 24px;
  padding: 0 4px;
  background: #f1f1f1;
}
.navbar button { gap: 2px; }
.navbar svg { width: 16px; height: 16px; }
.navbar .caret { border-width: 5px 3px 0; color: #333; }

/* Timeline */
.timeline { display: flex; height: 49px; border-top: 1px solid #c8c8c8; }
.play { display: flex; gap: 11px; width: 144px; padding: 9px 0 0 10px; }
.play svg { width: 14px; height: 16px; }
.play button { height: 38px; align-items: center; }
.track { flex: 1; }
.scroll { height: 7px; display: flex; justify-content: flex-end; margin: 0 -44px 0 0; }
.scroll i { width: 60%; border-radius: 4px; background: #c9c9c9; }
.pink { height: 6px; margin-right: 2px; background: #e391e5; }
#steps { display: flex; }
#steps li { flex: 1; height: 28px; padding: 1px 0 0 1px; border-bottom: 2px solid #c9c9c9; background: linear-gradient(#c9c9c9, #c9c9c9) 10px 21px / 2px 5px no-repeat; }
#steps svg { width: 18px; height: 18px; }
#steps .now { position: relative; padding-left: 4px; background: linear-gradient(#0696d7, #0696d7) 0 0 / 24px 22px no-repeat; }
#steps .now::after { content: ""; position: absolute; right: -2px; top: -3px; width: 2px; height: 31px; background: #555; }
#steps .now::before { content: ""; position: absolute; right: -6px; top: -4px; width: 11px; height: 11px; background: #555; clip-path: polygon(0 0, 100% 0, 100% 55%, 55% 100%, 0 55%); }
.settings { width: 50px; height: 56px; padding-left: 8px; }
```
FILE: app.js
```js
const use = (id, cls = "") => `<svg class="${cls}" aria-hidden="true"><use href="#${id}"/></svg>`;

/* Browser tree: [level, state, icons, name, extra class] */
const nodes = [
  [1, "closed", ["gear"], "Document Settings"],
  [1, "closed", ["folder"], "Named Views"],
  [1, "closed", ["eyeoff", "folder"], "Origin"],
  [1, "open", ["eye", "folder"], "Bodies"],
  [2, "closed", ["eyeoff", "folder"], "Fan (2)"],
  [2, "closed", ["eyeoff", "folder"], "CameraModule (1)"],
  [2, "closed", ["eyeoff", "folder"], "Lens (4)"],
  [2, "open", ["eyeoff", "folder"], "Screws (5)"],
  [3, "", ["eyeoff", "cyl"], "2.5x6mm"],
  [3, "", ["eyeoff", "cyl"], "3x20mm"],
  [3, "", ["eye faint", "cyl"], "3x30mm"],
  [3, "", ["eye faint", "cyl"], "3x30mm (1)"],
  [3, "", ["eye faint", "cyl"], "3x30mm (1) (1)"],
  [2, "closed", ["eye", "folder"], "Inserts (6)"],
  [2, "closed", ["eyeoff", "folder"], "Display (2)"],
  [2, "open", ["eye", "folder"], "Case (2)"],
  [3, "", ["eye", "cyl"], "BottomPannel"],
  [3, "", ["eye", "cyl"], "FrontPannel"],
  [1, "closed", ["eye", "folder"], "Sketches", "hatch"],
  [1, "closed", ["eyeoff", "comp", "link"], "Raspberry Pi 4 Model B v1:1", "linked"],
];
let html = `<li class="row l0"><button aria-label="Toggle">${use("open")}</button><div class="node root"><i class="pinkbar"></i>${use("eye")}<div class="hot">${use("comp")}<span>PiCamV3 v6</span></div><svg viewBox="0 0 16 16"><circle cx="8" cy="8" r="6" fill="#fff" stroke="#222" stroke-width="1.200"/><circle cx="8" cy="8" r="2.500" fill="#222"/></svg></div></li>`;
for (const [level, state, icons, name, extra = ""] of nodes) {
  const toggle = state ? `<button aria-label="Toggle ${name}">${use(state)}</button>` : "";
  const bar = extra === "linked" ? `<i class="pinkbar"></i>` : "";
  html += `<li class="row l${level}">${toggle}<div class="node ${extra}">${bar}${icons.map(i => use(...i.split(" "))).join("")}<span>${name}</span></div></li>`;
}
document.getElementById("tree").innerHTML = html;

/* Timeline features, in order */
const names = { f: "fillet", e: "ext", t: "thread", s: "sk", c: "chamfer", j: "joint", m: "move", h: "shell", p: "split" };
const order = "feettsecsejmhtsesefseesecseeseseesesphsesemseesemsefesemseefseemjmmjmjms";
document.getElementById("steps").innerHTML = [...order].map((k, i) =>
  `<li${i === order.length - 1 ? ' class="now"' : ""}>${use("t-" + names[k])}</li>`).join("");

/* Ventilation slots */
document.getElementById("slots").innerHTML = [331, 360, 390, 419, 449, 478, 508].map(y =>
  `<path d="M669.500 ${y}.5h22v15h-22z" fill="#fff" stroke="#000"/><path d="M692 ${y}.5h110v15H692" fill="none" stroke="#33332f" stroke-dasharray="13 2"/>`).join("");

/* Work plane grid, with the origin axes */
function drawGrid() {
  const w = window.innerWidth, h = window.innerHeight, step = 37.05, ox = 513.5, oy = 508.5;
  let out = ["", ""];
  for (let i = -Math.floor(ox / step); ox + i * step < w; i++) {
    out[i % 5 ? 0 : 1] += `M${Math.floor(ox + i * step) + .5} 140V${h}`;
  }
  for (let i = -Math.floor((oy - 140) / step); oy + i * step < h; i++) {
    out[i % 5 ? 0 : 1] += `M0 ${Math.floor(oy + i * step) + .5}H${w}`;
  }
  document.getElementById("grid").innerHTML =
    `<path class="minor" d="${out[0]}"/><path class="major" d="${out[1]}"/>` +
    `<path d="M0 ${oy}H${w}" stroke="#b4b4fa"/><path d="M${ox} 140V${h}" stroke="#a4f0a4"/>`;
}
drawGrid();
window.addEventListener("resize", drawGrid);
```
